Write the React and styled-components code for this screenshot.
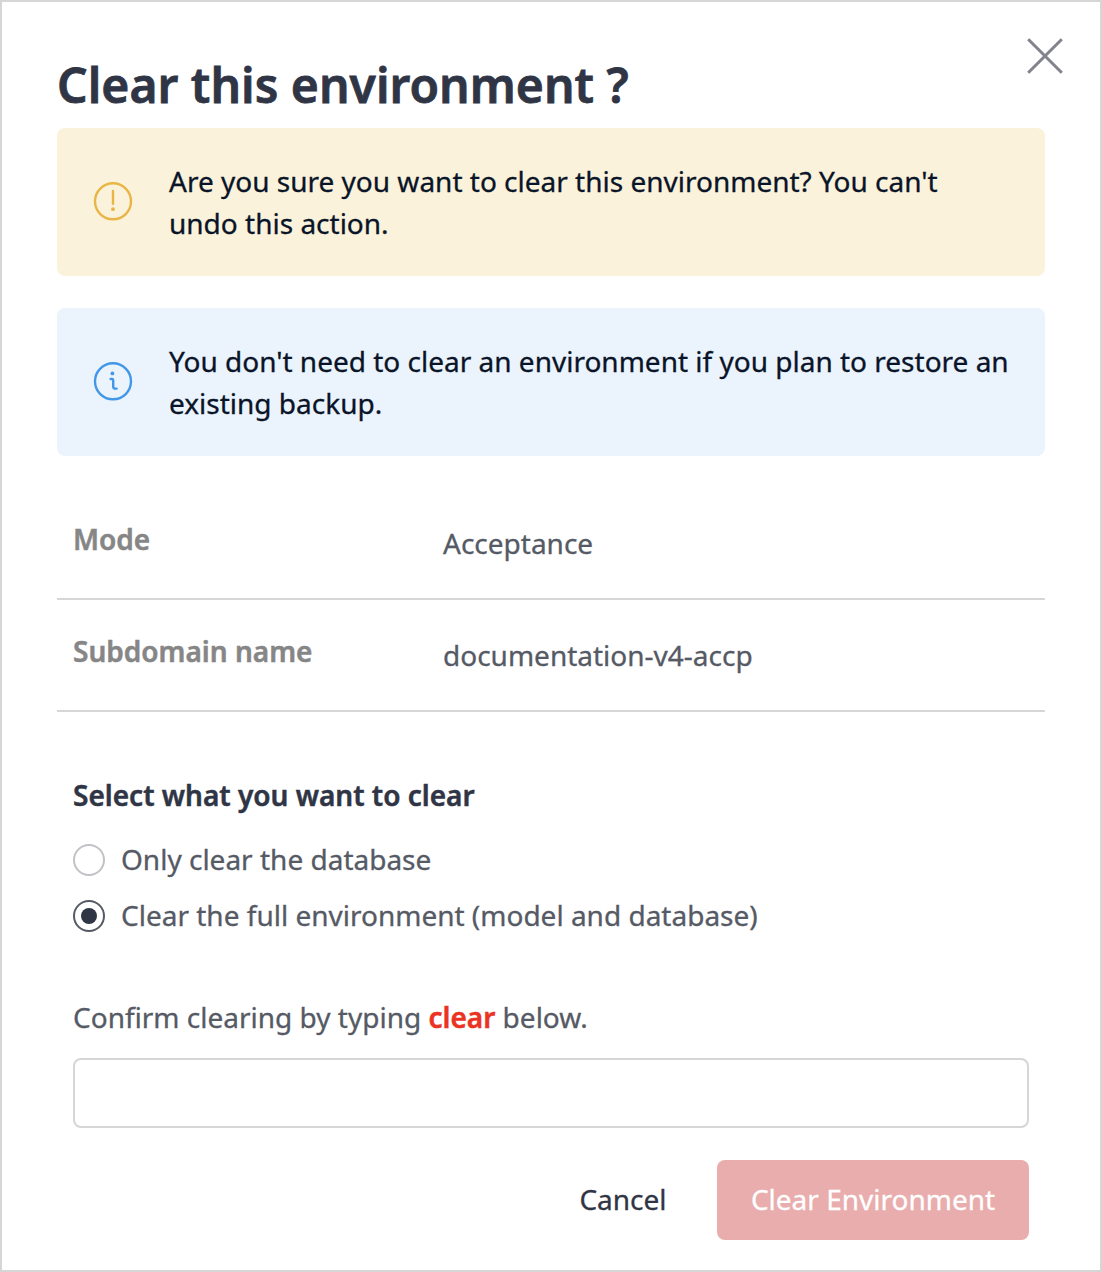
import React, { useState } from "react";
import styled, { createGlobalStyle } from "styled-components";

const GlobalStyle = createGlobalStyle`
  *, *::before, *::after { box-sizing: border-box; }
  body { margin: 0; background: #fff; }
  body, input, button { font-family: "Noto Sans", "Open Sans", sans-serif; }
`;

const Dialog = styled.section`
  position: relative;
  display: flex;
  flex-direction: column;
  width: 1102px;
  height: 1272px;
  padding: 55px 55px 0;
  border: 2px solid #d6d6d6;
  background: #fff;
  color: #555a65;
  font-size: 28px;
  line-height: 42px;
  -webkit-text-stroke: 0.3px currentColor;
`;

const CloseButton = styled.button`
  position: absolute;
  top: 36px;
  right: 37px;
  width: 36px;
  height: 36px;
  padding: 0;
  border: 0;
  background: none;
  svg { display: block; }
`;

const Title = styled.h1`
  margin: 0 0 15px;
  height: 56px;
  color: #2f3545;
  font-size: 48px;
  font-weight: 600;
  line-height: 56px;
  letter-spacing: 0.03px;
  white-space: nowrap;
  -webkit-text-stroke-width: 0.8px;
`;

const Notice = styled.div`
  display: flex;
  align-items: center;
  height: 148px;
  margin-bottom: 32px;
  padding: 0 32px 0 36px;
  border-radius: 8px;
  background: ${(p) => p.$background};
  color: #0a1428;
  svg { flex: none; margin: -2px 36px 0 0; }
`;

const NoticeText = styled.p`
  margin: 0;
  white-space: nowrap;
`;

const Details = styled.dl`
  margin: 0;
`;

const DetailRow = styled.div`
  display: flex;
  height: 112px;
  padding: 30px 16px 0;
  border-bottom: 2px solid #d6d6d6;
`;

const DetailLabel = styled.dt`
  width: 370px;
  color: #868686;
  font-weight: 600;
  -webkit-text-stroke-width: 0.5px;
`;

const DetailValue = styled.dd`
  margin: 4px 0 0;
`;

const Form = styled.form`
  display: flex;
  flex-direction: column;
  padding: 62px 16px 0;
`;

const Choices = styled.fieldset`
  margin: 0;
  padding: 0;
  border: 0;
`;

const Legend = styled.legend`
  padding: 0;
  margin-bottom: 16px;
  color: #2f3545;
  font-weight: 600;
  -webkit-text-stroke-width: 0.5px;
`;

const Choice = styled.label`
  display: flex;
  align-items: center;
  gap: 16px;
  height: 56px;
`;

const ChoiceText = styled.span`
  padding-bottom: 2px;
`;

const Radio = styled.input`
  appearance: none;
  flex: none;
  display: grid;
  place-items: center;
  width: 32px;
  height: 32px;
  margin: 0;
  border: 2px solid #c2c2c6;
  border-radius: 50%;
  background: #fff;
  &:checked { border-color: #555a65; }
  &:checked::before {
    content: "";
    width: 16px;
    height: 16px;
    border-radius: 50%;
    background: #2f3545;
  }
`;

const Confirmation = styled.label`
  margin: 52px 0 20px;
`;

const Keyword = styled.strong`
  color: #eb3323;
  font-weight: 600;
  -webkit-text-stroke: 0.5px #eb3323;
`;

const TextField = styled.input`
  width: 100%;
  height: 70px;
  padding: 0 16px;
  border: 2px solid #d6d6d6;
  border-radius: 8px;
  font-size: 28px;
`;

const Actions = styled.div`
  display: flex;
  justify-content: flex-end;
  margin-top: 32px;
`;

const Button = styled.button`
  width: ${(p) => p.$width}px;
  height: 80px;
  padding: 0 0 2px;
  border: 0;
  border-radius: 8px;
  background: ${(p) => (p.$danger ? "#e8adac" : "transparent")};
  color: ${(p) => (p.$danger ? "#fff" : "#2f3545")};
  font-size: 28px;
  -webkit-text-stroke: 0.3px ${(p) => (p.$danger ? "#fff" : "#2f3545")};
`;

const WarningIcon = () => (
  <svg width="40" height="40" viewBox="0 0 40 40" fill="none" stroke="#e9b545" strokeWidth="2.4" strokeLinecap="round">
    <circle cx="20" cy="20.3" r="18" />
    <path d="M20 10V22.7" />
    <circle cx="20" cy="28.2" r="1.9" fill="#e9b545" stroke="none" />
  </svg>
);

const InfoIcon = () => (
  <svg width="40" height="40" viewBox="0 0 40 40" fill="none" stroke="#4197e8" strokeWidth="2.4" strokeLinecap="round" strokeLinejoin="round">
    <circle cx="20" cy="20.3" r="18" />
    <path d="M17.6 18H19Q20.2 18 20.2 19.2V25.4Q20.2 27.6 22.4 27.6H23.6" />
    <circle cx="19.4" cy="12.4" r="1.9" fill="#4197e8" stroke="none" />
  </svg>
);

export default function App() {
  const [scope, setScope] = useState("full");
  return (
    <>
      <GlobalStyle />
      <Dialog role="dialog" aria-labelledby="title">
        <CloseButton aria-label="Close">
          <svg width="36" height="36" viewBox="0 0 36 36" stroke="#82838d" strokeWidth="3">
            <path d="M1.2 1.2L34.8 34.8M34.8 1.2L1.2 34.8" />
          </svg>
        </CloseButton>
        <Title id="title">Clear this environment ?</Title>
        <Notice $background="#fbf2db">
          <WarningIcon />
          <NoticeText>
            Are you sure you want to clear this environment? You can't<br />undo this action.
          </NoticeText>
        </Notice>
        <Notice $background="#ebf3fc">
          <InfoIcon />
          <NoticeText>
            You don't need to clear an environment if you plan to restore an<br />existing backup.
          </NoticeText>
        </Notice>
        <Details>
          <DetailRow>
            <DetailLabel>Mode</DetailLabel>
            <DetailValue>Acceptance</DetailValue>
          </DetailRow>
          <DetailRow>
            <DetailLabel>Subdomain name</DetailLabel>
            <DetailValue>documentation-v4-accp</DetailValue>
          </DetailRow>
        </Details>
        <Form onSubmit={(e) => e.preventDefault()}>
          <Choices>
            <Legend>Select what you want to clear</Legend>
            <Choice>
              <Radio type="radio" name="scope" checked={scope === "database"} onChange={() => setScope("database")} />
              <ChoiceText>Only clear the database</ChoiceText>
            </Choice>
            <Choice>
              <Radio type="radio" name="scope" checked={scope === "full"} onChange={() => setScope("full")} />
              <ChoiceText>Clear the full environment (model and database)</ChoiceText>
            </Choice>
          </Choices>
          <Confirmation htmlFor="confirm">
            Confirm clearing by typing <Keyword>clear</Keyword> below.
          </Confirmation>
          <TextField id="confirm" type="text" />
          <Actions>
            <Button type="button" $width={188}>Cancel</Button>
            <Button type="submit" $width={312} $danger>Clear Environment</Button>
          </Actions>
        </Form>
      </Dialog>
    </>
  );
}
